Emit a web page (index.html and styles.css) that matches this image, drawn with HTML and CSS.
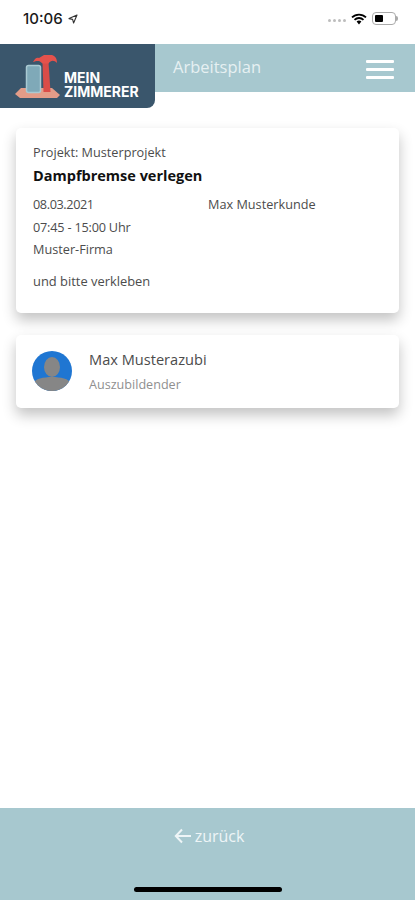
FILE: index.html
```html
<!DOCTYPE html>
<html lang="de">
<head>
    <meta charset="UTF-8">
    <meta name="viewport" content="width=device-width, initial-scale=1.0">
    <title>Arbeitsplan</title>
    <link rel="stylesheet" href="styles.css">
</head>
<body>
    <div class="app">
        <div class="statusbar">
            <div class="status-left">
                <span class="time">10:06</span>
                <svg class="loc" width="10" height="10" viewBox="0 0 10 10"><path d="M9 1 L1 4.6 L4.6 5.4 L5.6 9 Z" fill="none" stroke="#333" stroke-width="1.1" stroke-linejoin="round"/></svg>
            </div>
            <div class="status-right">
                <div class="signal"><i></i><i></i><i></i><i></i></div>
                <svg width="16" height="12" viewBox="0 0 16 12"><path d="M1 4.4 A10 10 0 0 1 15 4.4 M3.5 6.8 A6.5 6.5 0 0 1 12.5 6.8" fill="none" stroke="#000" stroke-width="1.8"/><path d="M5.6 8.6 A3.4 3.4 0 0 1 10.4 8.6 L8 11.4 Z" fill="#000"/></svg>
                <div class="battery"><div class="battery-level"></div></div>
            </div>
        </div>

        <header class="topbar">
            <div class="logo">
                <svg class="logo-mark" width="46" height="46" viewBox="0 0 46 46">
                    <path d="M1 41 L7 35 H38 L46 42 L43 45 H6 Z" fill="#e39c88"/>
                    <rect x="12.5" y="12.5" width="14" height="27" rx="2" fill="#7fa9b8" stroke="#a9c9d2" stroke-width="1.5"/>
                    <path d="M28.5 9 H34.5 L36.5 39 H29.5 Z" fill="#d94c48"/>
                    <path d="M19 9 C21 5 23 4 25 5 L30 2 L38 2 C41 3 43 5 43 10 C40 7 37 7 34.5 10.5 H28.5 L26 8.5 C24 7.5 21 8.5 19 9 Z" fill="#e5524c"/>
                </svg>
                <div class="logo-text">MEIN<br>ZIMMERER</div>
            </div>
            <div class="page-title">Arbeitsplan</div>
            <div class="burger"><span></span><span></span><span></span></div>
        </header>

        <main class="content">
            <section class="card job">
                <div class="project">Projekt: Musterprojekt</div>
                <h2 class="job-title">Dampfbremse verlegen</h2>
                <div class="job-grid">
                    <div class="job-col">
                        <div class="job-date">08.03.2021</div>
                        <div class="job-time">07:45 - 15:00 Uhr</div>
                        <div>Muster-Firma</div>
                    </div>
                    <div class="job-col">
                        <div>Max Musterkunde</div>
                    </div>
                </div>
                <div class="note">und bitte verkleben</div>
            </section>

            <section class="card person">
                <svg class="avatar" width="40" height="40" viewBox="0 0 40 40">
                    <defs><clipPath id="round"><circle cx="20" cy="20" r="20"/></clipPath></defs>
                    <circle cx="20" cy="20" r="20" fill="#1f76d2"/>
                    <g clip-path="url(#round)" fill="#868686">
                        <ellipse cx="20" cy="16" rx="8" ry="10"/>
                        <path d="M2 40 V32 C2 28 12 26 20 26 C28 26 38 28 38 32 V40 Z"/>
                    </g>
                </svg>
                <div class="person-info">
                    <div class="person-name">Max Musterazubi</div>
                    <div class="person-role">Auszubildender</div>
                </div>
            </section>
        </main>

        <footer class="bottombar">
            <div class="back">
                <svg width="17" height="16" viewBox="0 0 17 16"><path d="M8 1.5 L1.8 8 L8 14.5 M2 8 H17" fill="none" stroke="#eef5f7" stroke-width="2"/></svg>
                <span>zurück</span>
            </div>
            <div class="home-bar"></div>
        </footer>
    </div>
</body>
</html>
```

FILE: styles.css
```css
* {
    box-sizing: border-box;
}

body {
    margin: 0;
    background-color: #ffffff;
    font-family: "Open Sans", sans-serif;
}

.app {
    display: flex;
    flex-direction: column;
    width: 415px;
    height: 900px;
    overflow: hidden;
}

.statusbar {
    display: flex;
    justify-content: space-between;
    align-items: center;
    height: 44px;
    padding: 0 17px 7px 23px;
    flex-shrink: 0;
}

.status-left {
    display: flex;
    align-items: center;
    gap: 5px;
}

.time {
    font-family: Inter, sans-serif;
    font-size: 15px;
    font-weight: 500;
    color: #1a1a1a;
}

.status-right {
    display: flex;
    align-items: center;
    gap: 5px;
}

.signal {
    display: flex;
    gap: 2px;
    margin-top: 4px;
}

.signal i {
    width: 3px;
    height: 3px;
    border-radius: 50%;
    background-color: #bdbdbd;
}

.battery {
    position: relative;
    width: 24px;
    height: 13px;
    padding: 2px;
    margin-right: 2px;
    border: 1px solid #aaaaaa;
    border-radius: 4px;
}

/* battery nub */
.battery::after {
    content: "";
    position: absolute;
    top: 3px;
    right: -3px;
    width: 2px;
    height: 5px;
    background-color: #aaaaaa;
    border-radius: 0 2px 2px 0;
}

.battery-level {
    width: 8px;
    height: 100%;
    background-color: #000;
    border-radius: 1px;
}

.topbar {
    display: flex;
    align-items: flex-start;
    height: 48px;
    background-color: #a7c8cf;
    flex-shrink: 0;
}

.logo {
    display: flex;
    align-items: flex-end;
    gap: 4px;
    width: 155px;
    height: 64px;
    padding: 0 0 9px 14px;
    background-color: #3a566c;
    border-bottom-right-radius: 8px;
    flex-shrink: 0;
}

.logo-mark {
    flex-shrink: 0;
}

.logo-text {
    font-family: Inter, sans-serif;
    font-size: 14px;
    font-weight: 700;
    line-height: 14px;
    color: #ffffff;
}

.page-title {
    margin: 11px 0 0 18px;
    font-size: 16.5px;
    color: #e6f0f2;
}

.burger {
    display: flex;
    flex-direction: column;
    gap: 5px;
    width: 28px;
    margin: 16px 21px 0 auto;
}

.burger span {
    height: 3px;
    background-color: #ffffff;
    border-radius: 1px;
}

.content {
    flex: 1;
    padding: 36px 16px 0;
}

.card {
    width: 383px;
    background-color: #ffffff;
    border-radius: 5px;
    box-shadow: 0 7px 14px rgba(0, 0, 0, 0.24);
}

.job {
    height: 185px;
    padding: 16px 16px 16px 17px;
    margin-bottom: 22px;
}

.project {
    font-size: 12.7px;
    line-height: 17px;
    color: #4c4c4c;
}

.job-title {
    margin: 5px 0 8px;
    font-size: 14.5px;
    line-height: 19px;
    font-weight: 700;
    color: #111;
}

.job-grid {
    display: grid;
    grid-template-columns: 175px 1fr;
    font-size: 12.7px;
    line-height: 22.5px;
    color: #4c4c4c;
}

.job-date {
    letter-spacing: -0.4px;
}

.job-time {
    letter-spacing: -0.2px;
}

.note {
    margin-top: 9px;
    font-size: 12.9px;
    line-height: 22px;
    color: #4c4c4c;
}

.person {
    display: flex;
    align-items: flex-start;
    gap: 17px;
    height: 73px;
    padding: 16px;
}

.avatar {
    flex-shrink: 0;
}

.person-name {
    font-size: 14.6px;
    line-height: 16px;
    color: #4c4c4c;
}

.person-role {
    margin-top: 9px;
    font-size: 12.6px;
    line-height: 17px;
    color: #8f8f8f;
}

.bottombar {
    display: flex;
    flex-direction: column;
    align-items: center;
    height: 92px;
    background-color: #a7c8cf;
    flex-shrink: 0;
}

.back {
    display: flex;
    align-items: center;
    gap: 4px;
    margin: 17px 0 0 3px;
    font-size: 16px;
    color: #eef5f7;
}

.home-bar {
    width: 148px;
    height: 5px;
    margin-top: 40px;
    border-radius: 3px;
    background-color: #000;
}
```
